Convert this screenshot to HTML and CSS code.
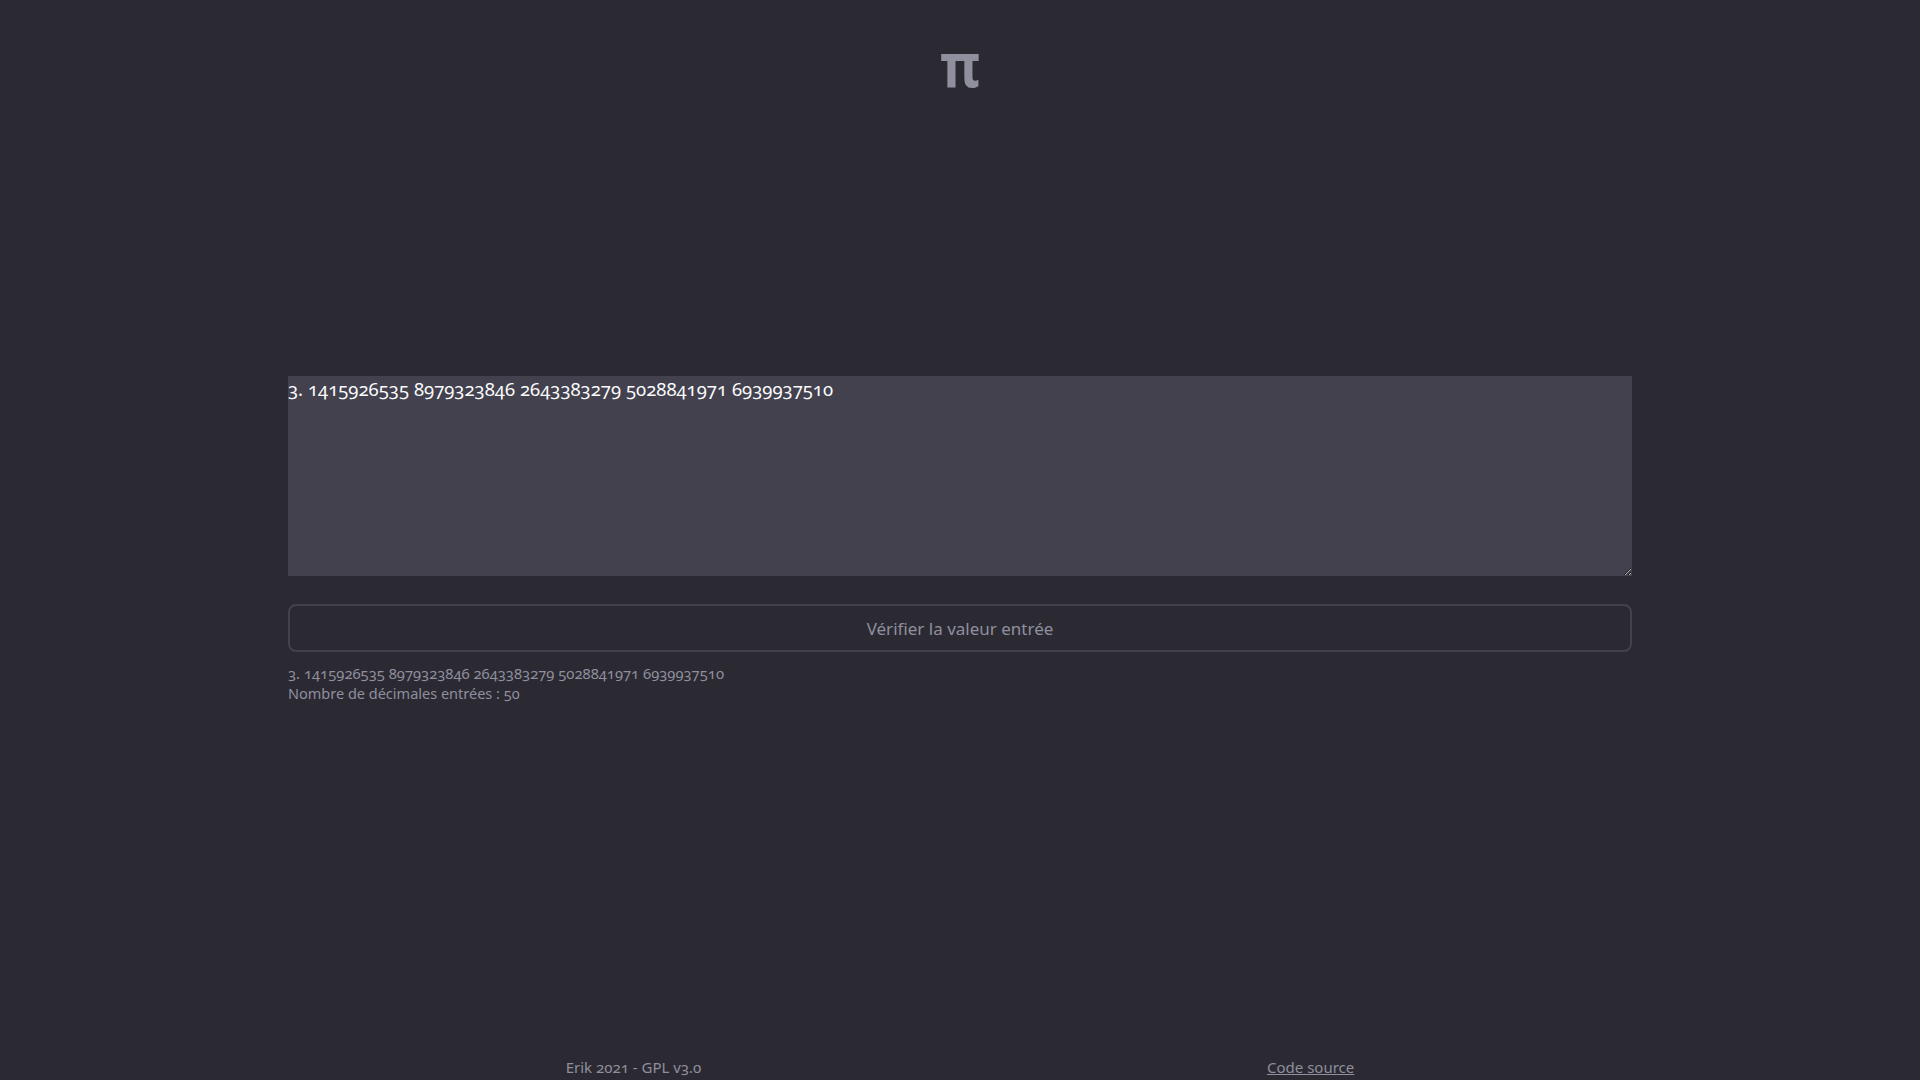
FILE: index.html
```html
<!DOCTYPE html>
<html lang="fr">
<head>
<meta charset="utf-8">
<title>π</title>
<link rel="stylesheet" href="styles.css">
</head>
<body>
<header class="top">
  <h1 class="logo">π</h1>
</header>
<main class="main">
  <textarea class="digits" spellcheck="false">3. 1415926535 8979323846 2643383279 5028841971 6939937510</textarea>
  <button class="check" type="button">Vérifier la valeur entrée</button>
  <div class="result">
    <div class="line-digits">3. 1415926535 8979323846 2643383279 5028841971 6939937510</div>
    <div>Nombre de décimales entrées : 50</div>
  </div>
</main>
<footer class="foot">
  <span>Erik 2021 - GPL v3.0</span>
  <a class="src" href="#">Code source</a>
</footer>
</body>
</html>
```
FILE: styles.css
```css
html, body {
  margin: 0;
  padding: 0;
}
body {
  background: #2b2a33;
  color: #8f8f9d;
  font-family: "Noto Sans", sans-serif;
  font-variant-numeric: oldstyle-nums;
  height: 1080px;
  display: flex;
  flex-direction: column;
  overflow: hidden;
}
.top {
  display: flex;
  justify-content: center;
  padding-top: 34px;
  height: 66px;
}
.logo {
  margin: 0;
  font-size: 54px;
  font-weight: 700;
  line-height: 60px;
  color: #8f8f9d;
  transform: scaleY(1.12);
}
.main {
  width: 1344px;
  margin: 0 auto;
  padding-top: 276px;
  display: flex;
  flex-direction: column;
  flex: 1;
}
.digits {
  box-sizing: border-box;
  width: 1344px;
  height: 200px;
  margin: 0;
  padding: 0;
  border: none;
  background: #42414d;
  color: #fbfbfe;
  font-family: "Noto Sans", serif;
  font-variant-numeric: oldstyle-nums;
  font-size: 18.5px;
  line-height: 26px;
  outline: none;
}
.check {
  margin-top: 28px;
  height: 48px;
  border: 2px solid #42414d;
  border-radius: 8px;
  background: #2b2a33;
  color: #8f8f9d;
  font-family: "Noto Sans", sans-serif;
  font-size: 17px;
}
.result {
  margin-top: 11px;
  font-size: 14.5px;
  line-height: 20px;
}
.line-digits {
  font-size: 14.8px;
}
.foot {
  display: flex;
  justify-content: space-evenly;
  font-size: 15px;
  line-height: 20px;
  padding-bottom: 3px;
}
.src {
  color: #8f8f9d;
}
```
